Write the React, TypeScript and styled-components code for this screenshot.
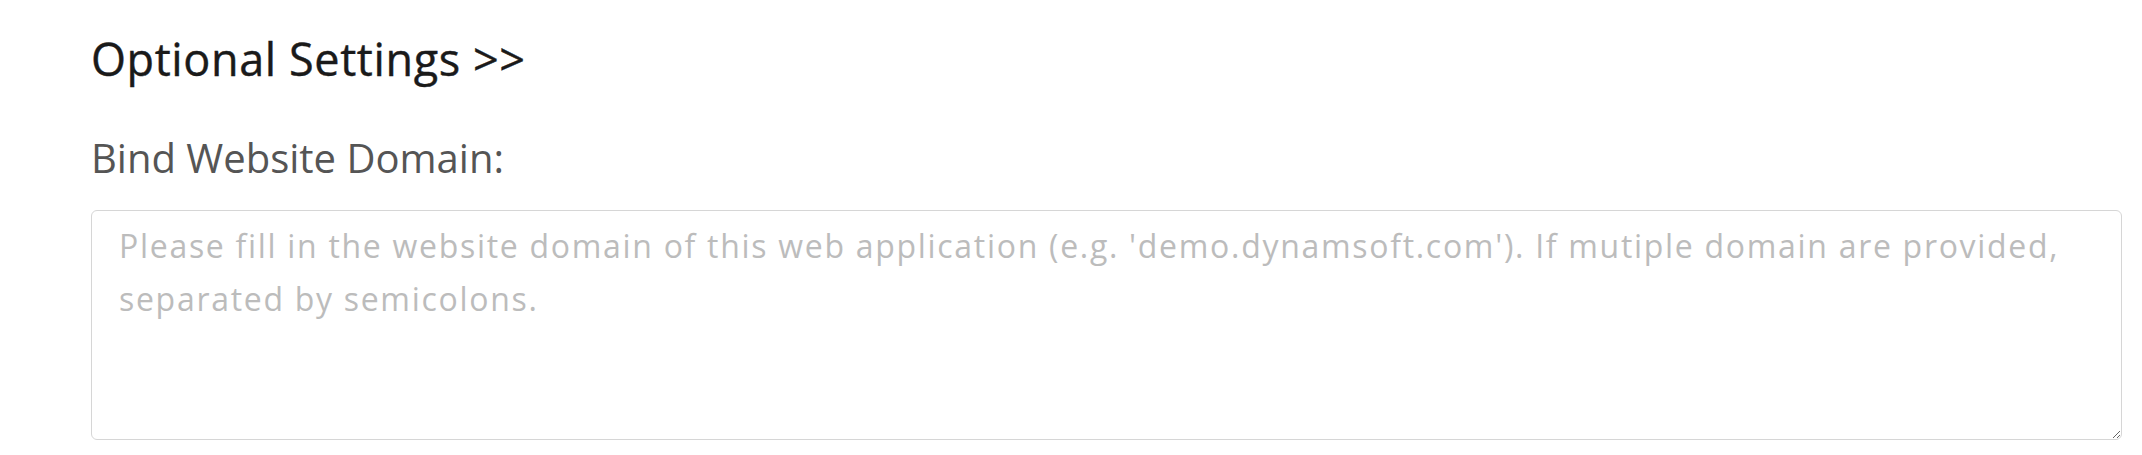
import styled, { createGlobalStyle } from "styled-components";

const GlobalStyle = createGlobalStyle`
  html, body {
    margin: 0;
    padding: 0;
    background: #ffffff;
  }
  body {
    font-family: "Open Sans", "Liberation Sans", sans-serif;
  }
`;

const Section = styled.section`
  padding: 29px 20px 0 91px;
  display: flex;
  flex-direction: column;
`;

const Title = styled.h2`
  margin: 0;
  font-size: 45px;
  line-height: 60px;
  font-weight: 500;
  letter-spacing: 0.6px;
  color: #1a1a1a;
  -webkit-text-stroke: 0.4px #1a1a1a;
`;

const Field = styled.div`
  margin-top: 41px;
  display: flex;
  flex-direction: column;
  gap: 24px;
`;

const Label = styled.label`
  font-size: 40px;
  line-height: 56px;
  font-weight: 400;
  color: #555555;
`;

const TextArea = styled.textarea`
  box-sizing: border-box;
  width: 100%;
  height: 230px;
  margin: 0;
  padding: 8px 27px;
  border: 1px solid #d6d6d6;
  border-radius: 6px;
  font-family: "Open Sans", "Liberation Sans", sans-serif;
  font-size: 32px;
  line-height: 53px;
  letter-spacing: 1.7px;
  color: #333333;
  background: #ffffff;
  outline: none;

  &::placeholder {
    color: #bcbcbc;
    opacity: 1;
  }
`;

export default function App() {
  return (
    <>
      <GlobalStyle />
      <Section>
        <Title>Optional Settings &gt;&gt;</Title>
        <Field>
          <Label htmlFor="domain">Bind Website Domain:</Label>
          <TextArea
            id="domain"
            placeholder="Please fill in the website domain of this web application (e.g. 'demo.dynamsoft.com'). If mutiple domain are provided, separated by semicolons."
          />
        </Field>
      </Section>
    </>
  );
}
